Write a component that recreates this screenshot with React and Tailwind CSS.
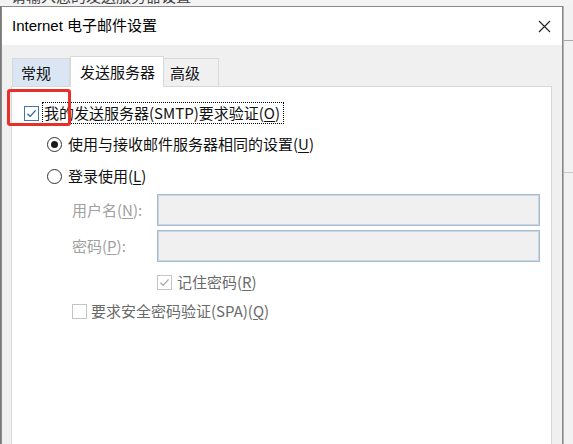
import React from 'react';

const Key = ({ children }) => <span className="underline underline-offset-2">{children}</span>;

const CheckBox = ({ checked, disabled, focus }) => (
  <div
    className={`w-[15px] h-[15px] flex items-center justify-center border bg-white shrink-0 ${
      disabled ? 'border-[#c4c4c4]' : focus ? 'border-[#3c78b4]' : 'border-[#333333]'
    }`}
  >
    {checked && (
      <svg width="11" height="11" viewBox="0 0 11 11">
        <path
          d="M1.5 5.8 L4.2 8.4 L9.6 2.4"
          fill="none"
          stroke={disabled ? '#a8a8a8' : '#2a5f9e'}
          strokeWidth="1.3"
        />
      </svg>
    )}
  </div>
);

const Radio = ({ checked }) => (
  <div className="w-[15px] h-[15px] rounded-full border border-[#333333] bg-white flex items-center justify-center shrink-0">
    {checked && <div className="w-[7px] h-[7px] rounded-full bg-[#1a1a1a]"></div>}
  </div>
);

const App = () => {
  return (
    <div className="relative w-[573px] h-[444px] overflow-hidden bg-[#f3f3f3] font-['Noto_Sans','Noto_Sans_CJK_SC',sans-serif] text-[15px] text-[#111]">
      {/* window behind the dialog */}
      <div className="h-[6px] overflow-hidden">
        <div className="-mt-[13px] pl-[11px] text-[15px] leading-[18px] text-[#444] font-['Noto_Sans_CJK_SC',sans-serif]">
          请输入您的发送服务器设置
        </div>
      </div>

      <div className="flex">
        <div className="w-[1px] h-[438px] bg-[#7a7a7a]"></div>

        {/* dialog */}
        <div className="w-[562px] h-[438px] border border-b-0 border-[#8a8a8a] flex flex-col bg-[#f0f0f0]">
          <div className="h-[38px] bg-white flex items-center justify-between pl-[10px] pr-[11px]">
            <span className="leading-[20px] font-['Liberation_Sans','Noto_Sans_CJK_SC',sans-serif] text-[#000]">
              Internet 电子邮件设置
            </span>
            <svg width="13" height="13" viewBox="0 0 13 13" className="mr-[0px]">
              <path d="M1 1 L12 12 M12 1 L1 12" stroke="#222" strokeWidth="1.1" fill="none" />
            </svg>
          </div>

          <div className="flex-1 flex flex-col pt-[11px] font-['Noto_Sans_CJK_SC',sans-serif]">
            {/* tabs */}
            <div className="flex items-end h-[30px] pl-[10px] relative z-10">
              <div className="w-[58px] h-[28px] bg-[#dae6f3] border border-b-0 border-[#d9d9d9] pl-[8px] flex items-center leading-[18px]">
                常规
              </div>
              <div className="w-[94px] h-[31px] -mb-[1px] bg-white border border-b-0 border-[#d9d9d9] pl-[9px] flex items-center leading-[18px]">
                发送服务器
              </div>
              <div className="w-[55px] h-[28px] bg-[#f0f0f0] border border-b-0 border-l-0 border-[#d9d9d9] pl-[6px] flex items-center leading-[18px]">
                高级
              </div>
            </div>

            {/* tab page */}
            <div className="ml-[9px] w-[541px] flex-1 bg-white border border-b-0 border-[#d9d9d9] flex flex-col">
              <div className="flex items-center h-[22px] mt-[15px] pl-[12px]">
                <CheckBox checked focus />
                <div className="ml-[3px] h-[22px] w-[242px] border border-dotted border-black flex items-center pl-[1px] leading-[18px]">
                  我的发送服务器(SMTP)要求验证(<Key>O</Key>)
                </div>
              </div>

              <div className="flex items-center h-[20px] mt-[10px] pl-[35px]">
                <Radio checked />
                <span className="ml-[6px] leading-[18px]">
                  使用与接收邮件服务器相同的设置(<Key>U</Key>)
                </span>
              </div>

              <div className="flex items-center h-[20px] mt-[12px] pl-[35px]">
                <Radio />
                <span className="ml-[6px] leading-[18px]">
                  登录使用(<Key>L</Key>)
                </span>
              </div>

              <div className="flex items-center mt-[8px] pl-[60px]">
                <span className="w-[85px] text-[#a0a0a0] leading-[18px]">
                  用户名(<Key>N</Key>):
                </span>
                <div className="w-[383px] h-[32px] bg-[#f0f0f0] border border-[#a8bad0] shadow-[inset_0_0_0_1px_#cbd6e3]"></div>
              </div>

              <div className="flex items-center mt-[4px] pl-[60px]">
                <span className="w-[85px] text-[#a0a0a0] leading-[18px]">
                  密码(<Key>P</Key>):
                </span>
                <div className="w-[383px] h-[32px] bg-[#f0f0f0] border border-[#a8bad0] shadow-[inset_0_0_0_1px_#cbd6e3]"></div>
              </div>

              <div className="flex items-center h-[20px] mt-[10px] pl-[145px]">
                <CheckBox checked disabled />
                <span className="ml-[5px] text-[#6a6a6a] leading-[18px]">
                  记住密码(<Key>R</Key>)
                </span>
              </div>

              <div className="flex items-center h-[20px] mt-[9px] pl-[60px]">
                <CheckBox disabled />
                <span className="ml-[4px] text-[#6a6a6a] leading-[18px]">
                  要求安全密码验证(SPA)(<Key>Q</Key>)
                </span>
              </div>
            </div>
          </div>
        </div>

        {/* desktop on the right */}
        <div className="flex-1 h-[438px] bg-[#f2f2f2] border-l border-[#b0b0b0] flex flex-col">
          <div className="h-[34px]"></div>
          <div className="border-t border-[#a8a8a8]"></div>
          <div className="h-[131px]"></div>
          <div className="border-t border-[#c8c8c8]"></div>
        </div>
      </div>

      {/* red annotation */}
      <div className="absolute left-[7px] top-[89px] w-[64px] h-[37px] border-[3px] border-[#e8302a] rounded-[3px]"></div>
    </div>
  );
};

export default App;
